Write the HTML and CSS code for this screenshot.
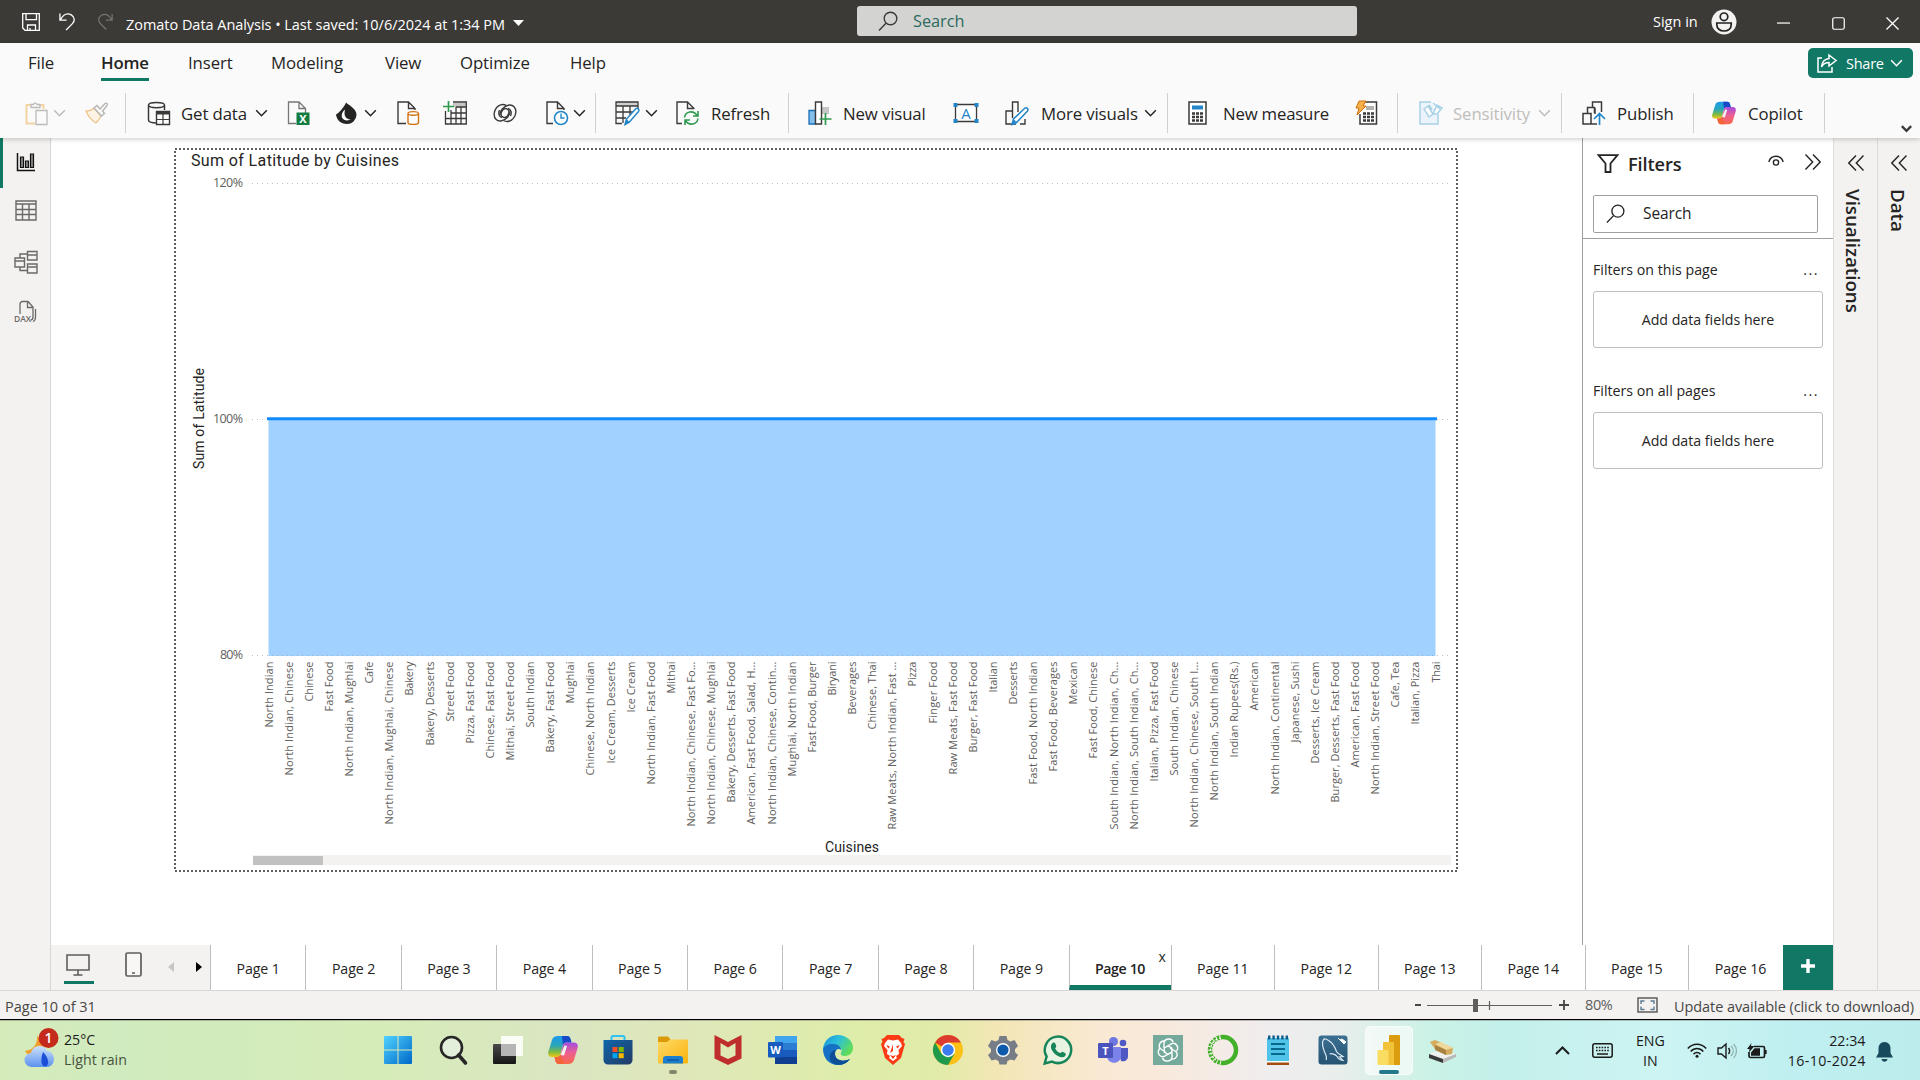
FILE: index.html
```html
<!DOCTYPE html>
<html lang="en">
<head>
<meta charset="utf-8">
<title>Zomato Data Analysis</title>
<link rel="stylesheet" href="styles.css">
</head>
<body>
<svg class="defs" width="0" height="0">
  <defs>
    <symbol id="chev" viewBox="0 0 14 9"><path d="M1 1.500 7 7.500 13 1.500" fill="none" stroke="currentColor" stroke-width="1.700"/></symbol>
    <symbol id="collapse" viewBox="0 0 16 16"><path d="M8 .5.8 8 8 15.500M15.500.5 8.300 8l7.200 7.500" fill="none" stroke="currentColor" stroke-width="1.400"/></symbol>
    <symbol id="search" viewBox="0 0 20 20"><circle cx="12.500" cy="7.500" r="6.300" fill="none" stroke="currentColor" stroke-width="1.400"/><path d="M8 12.200 1 19.500" stroke="currentColor" stroke-width="1.400"/></symbol>
    <linearGradient id="cpA" x1="0" y1="0" x2="0" y2="1"><stop offset="0" stop-color="#1b9bee"/><stop offset=".45" stop-color="#2aa5b8"/><stop offset=".75" stop-color="#7dbb45"/><stop offset="1" stop-color="#f2c811"/></linearGradient>
    <linearGradient id="cpB" x1="0" y1="0" x2="0" y2="1"><stop offset="0" stop-color="#a44ce0"/><stop offset=".5" stop-color="#ee5f8e"/><stop offset="1" stop-color="#f9694b"/></linearGradient>
    <symbol id="copilot" viewBox="0 0 30 30">
      <path d="M10 1h9c2 0 3 1 3.500 3l1 3.500h-5c-2 0-3 1-3.600 3L12.500 19c-.6 2-1.500 3-3.500 3H4c-3 0-4.500-2-3.600-5.500L4 5c.8-2.700 2.800-4 6-4z" fill="url(#cpA)"/>
      <path d="M14 1h5c2 0 3 1 3.500 3l1 3.500h-5c-2 0-3 1-3.600 2.500z" fill="#1849c6"/>
      <path d="M20 29h-9c-2 0-3-1-3.500-3l-1-4H9c2 0 3-1 3.600-3l2.400-8.500c.6-2 1.500-3 3.500-3H26c3 0 4.500 2 3.600 5.500L26 25c-.8 2.700-2.800 4-6 4z" fill="url(#cpB)"/>
      <path d="M16 29h-5c-2 0-3-1-3.500-3l-1-4H9c2 0 3-1 3.600-3z" fill="#f4653a"/>
      <path d="m16.500 10.500 2.500.5-3 9.500-3.500-.5z" fill="#f4f3ee"/>
    </symbol>
    <linearGradient id="winG" x1="0" y1="0" x2="1" y2="1"><stop offset="0" stop-color="#4fd3ff"/><stop offset="1" stop-color="#0067c8"/></linearGradient>
    <linearGradient id="edgeG" x1="0" y1="0" x2="1" y2=".5"><stop offset="0" stop-color="#1a8ed8"/><stop offset=".5" stop-color="#2bbfdc"/><stop offset="1" stop-color="#5fdc5a"/></linearGradient>
    <linearGradient id="foldG" x1="0" y1="0" x2="1" y2="1"><stop offset="0" stop-color="#ffd967"/><stop offset="1" stop-color="#fab30c"/></linearGradient>
    <linearGradient id="storeG" x1="0" y1="0" x2="1" y2="1"><stop offset="0" stop-color="#0e66ac"/><stop offset="1" stop-color="#233a63"/></linearGradient>
    <linearGradient id="tvG" x1="0" y1="0" x2="0" y2="1"><stop offset="0" stop-color="#4a4a4a"/><stop offset="1" stop-color="#161616"/></linearGradient>
    <linearGradient id="sqlG" x1="0" y1="0" x2="0" y2="1"><stop offset="0" stop-color="#3c7092"/><stop offset="1" stop-color="#245371"/></linearGradient>
    <linearGradient id="cloudG" x1="0" y1="0" x2="0" y2="1"><stop offset="0" stop-color="#cfe2fb"/><stop offset="1" stop-color="#5b92ee"/></linearGradient>
  </defs>
</svg>

<header class="titlebar">
  <svg class="i-save" viewBox="0 0 18 18"><path d="M.700.700h16.600v16.600H3L.700 15zM4 .700v6h10.500v-6M5.500 17v-5h8v5M8 17v-2" fill="none" stroke="#fff" stroke-width="1.300"/></svg>
  <svg class="i-undo" viewBox="0 0 18 19"><path d="M1 1v7h7M1.500 7.500C5 1.500 9.500.500 13 2.500c4 2.500 4 6.500 1 9.500L7.500 18.500" fill="none" stroke="#fff" stroke-width="1.400"/></svg>
  <svg class="i-redo" viewBox="0 0 18 19"><path d="M17 1v7h-7M16.500 7.500C13 1.500 8.500.500 5 2.500 1 5 1 9 4 12l6.500 6.500" fill="none" stroke="#777572" stroke-width="1.400"/></svg>
  <span class="doc-title">Zomato Data Analysis &#8226; Last saved: 10/6/2024 at 1:34 PM</span>
  <svg class="i-caret" viewBox="0 0 11 6"><path d="M0 0h11L5.500 6z" fill="#fff"/></svg>
  <div class="title-search"><svg viewBox="0 0 20 20"><use href="#search"/></svg><span>Search</span></div>
  <span class="signin">Sign in</span>
  <svg class="i-avatar" viewBox="0 0 26 26"><circle cx="13" cy="13" r="12.500" fill="#f3f2f1"/><g fill="none" stroke="#222" stroke-width="1.700"><circle cx="13" cy="7.800" r="3.800"/><path d="M5.800 14h14.400v1.500c0 4-3 6.500-7.200 6.500s-7.200-2.500-7.200-6.500z"/></g></svg>
  <svg class="i-win" viewBox="0 0 14 14"><path d="M0 6.500h14" stroke="#fff" stroke-width="1.300"/></svg>
  <svg class="i-win" viewBox="0 0 14 14"><rect x=".8" y=".8" width="12.400" height="12.400" rx="2" fill="none" stroke="#fff" stroke-width="1.300"/></svg>
  <svg class="i-win" viewBox="0 0 14 14"><path d="m.5.500 13 13M13.500.500l-13 13" stroke="#fff" stroke-width="1.400"/></svg>
</header>

<section class="ribbon">
  <nav class="menu">
    <span>File</span><span class="active">Home</span><span>Insert</span><span>Modeling</span><span>View</span><span>Optimize</span><span>Help</span>
    <button class="share"><svg class="i-share" viewBox="0 0 20 19"><path d="M5 4H1v14h14v-5M12 1l7 5.500-7 5.500V8.500c-4 0-6 1.500-7.500 4.500C5 7.500 8 5 12 4.500z" fill="none" stroke="#fff" stroke-width="1.500"/></svg><span>Share</span><svg class="chev" viewBox="0 0 14 9"><use href="#chev"/></svg></button>
  </nav>
  <div class="commands">
    <svg class="ic" viewBox="0 0 24 24"><path d="M6 4H1.500v18.500H10M14 4h4.500v4" fill="none" stroke="#f3d3a4" stroke-width="2"/><path d="M6 6.500v-3h2.500a1.800 1.800 0 0 1 3.500 0H15v3zM11 9.500h11V23.500H11z" fill="#fafafa" stroke="#bdbbb9" stroke-width="1.300"/></svg>
    <svg class="chev dim" viewBox="0 0 14 9"><use href="#chev"/></svg>
    <svg class="ic" viewBox="0 0 24 24"><path d="M1 10c4 0 6-1 8-3l7 8c-1 2-3 5-5 7C6 19 3 15 1 10z" fill="#fdf3e4" stroke="#eec48c" stroke-width="1.300"/><path d="m9 7 3-2.500 3 3.500 5-5.500c1.500-1 3 .5 2 2L17.500 10l2 2.500L16.500 15z" fill="#fafafa" stroke="#b5b3b1" stroke-width="1.300"/></svg>
    <i class="sep"></i>
    <svg class="ic" viewBox="0 0 24 24"><path d="M10 22c-4.500 0-8.500-1-8.500-3V4c0-3.500 16-3.500 16 0v5M1.500 4c0 3.500 16 3.500 16 0" fill="none" stroke="#3b3a39" stroke-width="1.500"/><path d="M9.500 10.500h13v13h-13z" fill="#fff" stroke="#3b3a39" stroke-width="1.400"/><path d="M9.500 12h13" stroke="#3b3a39" stroke-width="3"/><path d="M9.500 18.500h13M16 12v11" stroke="#3b3a39" stroke-width="1.200"/></svg>
    <span class="label l-get">Get data</span>
    <svg class="chev" viewBox="0 0 14 9"><use href="#chev"/></svg>
    <svg class="ic" viewBox="0 0 24 24"><path d="M9 22.500H1.500V1h10.500l6.500 6.500v5M12 1v6.500h6.500" fill="none" stroke="#797775" stroke-width="1.300"/><path d="M9.500 11.500h13v12.500h-13z" fill="#107c41"/><text x="16" y="21.800" text-anchor="middle" class="glyph" font-size="11">X</text></svg>
    <svg class="ic" viewBox="0 0 24 24"><path d="M10 1.500c3 3 10.500 6 10.500 12.500A9.500 9.500 0 0 1 11 23C4.500 23 .500 18.500 0 13.500c3-1.500 8-7 10-12z" fill="#252423"/><path d="M9 8.500c-4 3.500-4.500 8.500-.5 10.500 3 1.200 6-.5 6-.5-5-.5-7-4-5.500-10z" fill="#fff"/></svg>
    <svg class="chev" viewBox="0 0 14 9"><use href="#chev"/></svg>
    <svg class="ic" viewBox="0 0 24 24"><path d="M9 22.500H1V1h10.500L18 7.500V9M11.500 1v6.500H18" fill="none" stroke="#3b3a39" stroke-width="1.400"/><path d="M11 12.500c0-2.500 10.500-2.500 10.500 0v9c0 2.500-10.500 2.500-10.500 0zM11 12.500c0 2.300 10.500 2.300 10.500 0" fill="#fff" stroke="#d2700f" stroke-width="1.400"/></svg>
    <svg class="ic" viewBox="0 0 24 24"><path d="M10 2h13v4H10z" fill="#c8c6c4"/><path d="M10 1h13.300v22H2.500V10M2 17.500h21M8 12h15M8 9v14M13 6v17M18 6v17M13 6h10" fill="none" stroke="#3b3a39" stroke-width="1.300"/><path d="M5.500 0v11M0 5.500h11" stroke="#2f9a4e" stroke-width="1.700"/></svg>
    <svg class="ic" viewBox="0 0 24 24"><g fill="none" stroke="#3b3a39" stroke-width="1.400"><ellipse cx="12" cy="12" rx="3.600" ry="4.600" transform="rotate(25 12 12)"/><path d="M13.500 4.500C8 1.500 2 6 1.200 12.500.800 17.500 4 20.500 8 20 13.500 19 17.500 14 17 9.500M9 16.500c-3-1-4-4-2.500-7.500"/><path d="M10.500 19.500c5.500 3 11.500-1.500 12.300-8 .4-5-2.800-8-6.800-7.500C10.500 5 6.500 10 7 14.500M15 7.500c3 1 4 4 2.500 7.500"/></g></svg>
    <svg class="ic" viewBox="0 0 24 24"><path d="M7 22.500H1V1h10.500L18 7.500V9M11.500 1v6.500H18" fill="none" stroke="#3b3a39" stroke-width="1.400"/><circle cx="15" cy="17" r="6.500" fill="#fff" stroke="#2486c8" stroke-width="1.600"/><path d="M15 12.500V17h3.500" fill="none" stroke="#2486c8" stroke-width="1.400"/></svg>
    <svg class="chev" viewBox="0 0 14 9"><use href="#chev"/></svg>
    <i class="sep"></i>
    <svg class="ic" viewBox="0 0 24 24"><path d="M1 1h22v4H1z" fill="#d2d0ce"/><path d="M7 22.500H1V1h22v7M1 5h22M1 11h17M1 17h10M8 5v17M15 5v9" fill="none" stroke="#3b3a39" stroke-width="1.300"/><path d="m10 23.500 1.500-5.500L21 7.500c1.500-1 4 1 2.500 3L14 21.500z" fill="#fff" stroke="#2486c8" stroke-width="1.500"/><path d="m10 23.500 1.500-5.500 3 3z" fill="#2486c8"/></svg>
    <svg class="chev" viewBox="0 0 14 9"><use href="#chev"/></svg>
    <svg class="ic" viewBox="0 0 24 24"><path d="M6 22.500H1V1h10.500L18 7.500V8M11.500 1v6.500H18" fill="none" stroke="#3b3a39" stroke-width="1.400"/><path d="M8.500 16.500c1-6.500 9-7.500 12.500-2M22 10v5h-5M22 17.500c-1 6.500-9 7.500-12.500 2M9 24v-5h5" fill="none" stroke="#2f9a4e" stroke-width="1.600"/></svg>
    <span class="label l-refresh">Refresh</span>
    <i class="sep"></i>
    <svg class="ic" viewBox="0 0 24 24"><path d="M13 6h8v7h-8z" fill="#c8c6c4"/><path d="M1 9.500h6.500V23H1z" fill="#83beec" stroke="#1a6fb8" stroke-width="1.300"/><path d="M7.500 1h6v22h-6z" fill="#fff" stroke="#3b3a39" stroke-width="1.400"/><path d="M17.500 12v12M11.500 18h12" stroke="#2f9a4e" stroke-width="1.700"/></svg>
    <span class="label l-visual">New visual</span>
    <svg class="ic wide" viewBox="0 0 26 24"><path d="M2.500 3.500h21v17h-21z" fill="#fff" stroke="#3b3a39" stroke-width="1.300"/><path d="M.500 2h4v4h-4zM21.500 2h4v4h-4zM.500 18h4v4h-4zM21.500 18h4v4h-4z" fill="#2486c8"/><text x="13" y="17.500" text-anchor="middle" class="glyph-a" font-size="15">A</text></svg>
    <svg class="ic" viewBox="0 0 24 24"><path d="M7 10H1v13h6M7.500 17V1h5.500v10M20 18v5h-5M8 23h3" fill="none" stroke="#3b3a39" stroke-width="1.400"/><path d="m7 23.500 1.500-5.500L20 7c1.500-1 4 1 2.500 3L11 22z" fill="#fff" stroke="#2486c8" stroke-width="1.500"/><path d="M7 23.500 8.500 18l3 3z" fill="#2486c8"/></svg>
    <span class="label l-more">More visuals</span>
    <svg class="chev" viewBox="0 0 14 9"><use href="#chev"/></svg>
    <i class="sep"></i>
    <svg class="ic" viewBox="0 0 24 24"><path d="M1 1h17v22H1z" fill="#fff" stroke="#3b3a39" stroke-width="1.500"/><path d="M4 4.500h11v4H4z" fill="#2486c8"/><path d="M4 12.500h11M4 16h11M4 19.500h11" stroke="#3b3a39" stroke-width="2.500" stroke-dasharray="3 1"/></svg>
    <span class="label l-measure">New measure</span>
    <svg class="ic" viewBox="0 0 24 24"><path d="M10 1h11.500v22H5V13" fill="#fff" stroke="#3b3a39" stroke-width="1.500"/><path d="M11 5h8v4h-8z" fill="#b3b0ad"/><path d="M8 12.500h11M8 16h11M8 19.500h11" stroke="#3b3a39" stroke-width="2.500" stroke-dasharray="3 1"/><path d="M4 0h7L8 5h3L2 14l2-7H1z" fill="#f5b04c" stroke="#d2700f" stroke-width="1"/></svg>
    <i class="sep"></i>
    <svg class="ic" viewBox="0 0 24 24"><path d="M12 1H1v22h18V13" fill="#eaf4fa" stroke="#a9d1e6" stroke-width="1.500"/><path d="m5 8 4-3 5 8-4 3zM10 4l3 5M14 13l4-9 5 3-5 6zM14 2l7 6" fill="#fff" stroke="#a9d1e6" stroke-width="1.500"/></svg>
    <span class="label l-sens">Sensitivity</span>
    <svg class="chev dim" viewBox="0 0 14 9"><use href="#chev"/></svg>
    <i class="sep"></i>
    <svg class="ic" viewBox="0 0 24 24"><path d="M1 12.500h8V23H1zM5.500 12V6.500h7V12M10.500 6V1h9v10M9 23h6M13 7v6" fill="none" stroke="#3b3a39" stroke-width="1.500"/><path d="M17.500 24V12.500M12 18l5.500-5.500L23 18" fill="none" stroke="#2486c8" stroke-width="1.700"/></svg>
    <span class="label l-publish">Publish</span>
    <i class="sep"></i>
    <svg class="ic" viewBox="0 0 30 30"><use href="#copilot"/></svg>
    <span class="label l-copilot">Copilot</span>
    <i class="sep"></i>
    <svg class="i-fold" viewBox="0 0 14 9"><path d="M1 1.500 7 7.500 13 1.500" fill="none" stroke="#3b3a39" stroke-width="3"/></svg>
  </div>
</section>

<div class="workspace">
  <aside class="rail">
    <div class="rail-item on"><svg viewBox="0 0 24 24"><path d="M3.500 3v17.500H21" fill="none" stroke="#111" stroke-width="1.500"/><path d="M6.500 7h3v10.500h-3zM11.500 11h3v6.500h-3zM16.500 4h3v13.500h-3z" fill="#888" stroke="#111" stroke-width="1.200"/></svg></div>
    <div class="rail-item"><svg viewBox="0 0 24 24"><path d="M2 2h20v19H2zM2 5h20M2 10.500h20M2 15.500h20M8.500 5v16M15 5v16" fill="none" stroke="#6b6967" stroke-width="1.400"/></svg></div>
    <div class="rail-item"><svg viewBox="0 0 24 24"><path d="M1 8h9.500v9H1zM1 11h9.500M13.500 1.500H23V10h-9.500zM13.500 5H23M13.500 14H23v9h-9.500zM13.500 17H23M6 8V4h7.500M6 17v3.500h7.500" fill="none" stroke="#6b6967" stroke-width="1.400"/></svg></div>
    <div class="rail-item"><svg viewBox="0 0 24 24"><path d="M6 14V4c0-1.500 1-2.500 2.500-2.500H14L19 7v10c0 2-1 3-2.500 3M13.500 2v5.500H19M21.500 9v8c0 3-1 4-2.500 4.500" fill="none" stroke="#6b6967" stroke-width="1.300"/><text x="0" y="21.500" class="dax" font-size="8.500" textLength="17">DAX</text></svg></div>
  </aside>

  <div class="main">
    <div class="canvas-row">
      <div class="canvas">
        <svg id="chart" class="chart" viewBox="174 148 1284 724" width="1284" height="724">
          <rect x="175" y="149" width="1282" height="722" fill="none" stroke="#605e5c" stroke-width="2" stroke-dasharray="2 2"/>
          <text class="ch-title" x="191" y="166" textLength="208">Sum of Latitude by Cuisines</text>
          <text class="ch-axis" x="213" y="187" textLength="30">120%</text>
          <text class="ch-axis" x="213" y="423" textLength="30">100%</text>
          <text class="ch-axis" x="220" y="659" textLength="23">80%</text>
          <path d="M268.500 419H1435.500V656H268.500z" fill="#a0d1ff"/>
          <path d="M252 183.500H1450M252 419.500H1450M252 655.500H1450" stroke="#9a9896" stroke-opacity=".6" stroke-dasharray="1 4"/>
          <path d="M267 418.700H1437" stroke="#118dff" stroke-width="3"/>
          <text class="ch-name" transform="translate(204 469) rotate(-90)" textLength="101">Sum of Latitude</text>
          <g id="categories" class="ch-cat"></g>
          <text class="ch-name" x="825" y="852" textLength="54">Cuisines</text>
          <rect x="253" y="855" width="1198" height="10" fill="#f3f2f1"/>
          <rect x="253" y="856" width="70" height="9" fill="#c1c1c1"/>
        </svg>
      </div>
      <aside class="filters">
        <div class="f-head">
          <svg class="i-funnel" viewBox="0 0 22 19"><path d="M1.500 1.200h19L13.500 9.500V18h-5V9.500z" fill="none" stroke="#252423" stroke-width="1.800"/></svg>
          <b>Filters</b>
          <svg class="i-eye" viewBox="0 0 16 12"><path d="M.800 7C3-.700 13-.700 15.200 7" fill="none" stroke="#252423" stroke-width="1.400"/><circle cx="8" cy="7.500" r="2.600" fill="none" stroke="#252423" stroke-width="1.400"/></svg>
          <svg class="i-more" viewBox="0 0 16 16"><use href="#collapse" transform="matrix(-1 0 0 1 16 0)"/></svg>
        </div>
        <div class="f-search"><svg viewBox="0 0 20 20"><use href="#search"/></svg><span>Search</span></div>
        <div class="f-body">
          <div class="f-sec"><span>Filters on this page</span><i>...</i></div>
          <div class="f-drop">Add data fields here</div>
          <div class="f-sec second"><span>Filters on all pages</span><i>...</i></div>
          <div class="f-drop">Add data fields here</div>
        </div>
      </aside>
    </div>
    <div class="tabs">
      <div class="views">
        <svg class="v-desk" viewBox="0 0 24 22"><path d="M1 1h22v15H1zM12 16v5M7.500 21h9" fill="none" stroke="#605e5c" stroke-width="1.600"/></svg>
        <svg class="v-phone" viewBox="0 0 17 25"><rect x="1" y="1" width="15" height="23" rx="1.500" fill="#f8f7f6" stroke="#605e5c" stroke-width="1.700"/><path d="M7 21h3" stroke="#605e5c" stroke-width="1.500"/></svg>
        <svg class="v-arrow" viewBox="0 0 6 10"><path d="M6 0v10L0 5z" fill="#c8c6c4"/></svg>
        <svg class="v-arrow" viewBox="0 0 6 10"><path d="M0 0v10l6-5z" fill="#000"/></svg>
      </div>
      <div class="tab">Page 1</div><div class="tab">Page 2</div><div class="tab">Page 3</div><div class="tab">Page 4</div><div class="tab">Page 5</div><div class="tab">Page 6</div><div class="tab">Page 7</div><div class="tab">Page 8</div><div class="tab">Page 9</div>
      <div class="tab current">Page 10<span class="close">x</span></div>
      <div class="tab wide">Page 11</div><div class="tab wide">Page 12</div><div class="tab wide">Page 13</div><div class="tab wide">Page 14</div><div class="tab wide">Page 15</div><div class="tab wide last">Page 16</div>
      <div class="add"><svg viewBox="0 0 14 14"><path d="M7 0v14M0 7h14" stroke="#fff" stroke-width="3.400"/></svg></div>
    </div>
  </div>

  <aside class="side vis"><svg viewBox="0 0 16 16"><use href="#collapse"/></svg><span>Visualizations</span></aside>
  <aside class="side data"><svg viewBox="0 0 16 16"><use href="#collapse"/></svg><span>Data</span></aside>
</div>

<div class="status">
  <span class="s-page">Page 10 of 31</span>
  <svg class="s-zoom" viewBox="0 0 158 16"><path d="M1 8h6M145 8h10M150 3v10" stroke="#484644" stroke-width="1.800"/><path d="M13 8.500h125M75.500 4v9" stroke="#605e5c" stroke-width="1.200"/><path d="M59 2h5v13h-5z" fill="#605e5c"/></svg>
  <span class="s-pct">80%</span>
  <svg class="s-fit" viewBox="0 0 21 16"><path d="M1 1h19v14H1z" fill="none" stroke="#605e5c" stroke-width="1.500"/><path d="M4 7V4h3.500M17 7V4h-3.500M4 9.500v3h3.500M17 9.500v3h-3.500" fill="none" stroke="#5b7d94" stroke-width="1.400"/></svg>
  <span class="s-upd">Update available (click to download)</span>
</div>

<footer class="taskbar">
  <div class="weather">
    <svg viewBox="0 0 36 42"><path d="M13 8c1 8-3 15-12 16 4 8 16 7 19-3z" fill="#f2a02c"/><path d="M8 40a7 7 0 0 1-1-14c1-8 13-10 16-2 8 0 10 14 1 16z" fill="url(#cloudG)"/><path d="M19 25c6 6 7 14 2 14.500-5-.5-4-9-2-14.500z" fill="#1c4fd8"/><circle cx="24.500" cy="11" r="10" fill="#c42b1c"/><text x="24.500" y="16" class="glyph-n" text-anchor="middle" font-size="14">1</text></svg>
    <div class="w-text"><span>25°C</span><span class="w-sub">Light rain</span></div>
  </div>
  <div class="apps">
    <div class="app"><svg viewBox="0 0 30 30"><path d="M1 2a1 1 0 0 1 1-1h12.500v13.500H1zM15.500 1H28a1 1 0 0 1 1 1v12.500H15.500zM1 15.500h13.500V29H2a1 1 0 0 1-1-1zM15.500 15.500H29V28a1 1 0 0 1-1 1H15.500z" fill="url(#winG)"/></svg></div>
    <div class="app"><svg viewBox="0 0 30 30"><circle cx="13.500" cy="12.500" r="10.500" fill="#e3efdb" stroke="#272727" stroke-width="2.600"/><path d="m20.500 20 7 8" stroke="#272727" stroke-width="3.600" stroke-linecap="round"/></svg></div>
    <div class="app"><svg viewBox="0 0 30 30"><rect x="0" y="9" width="23" height="20" rx="1" fill="url(#tvG)"/><rect x="8" y="1" width="22" height="20" rx="1" fill="#fff" opacity=".85"/><path d="M8 9h15v12H8z" fill="#b5b5b5"/></svg></div>
    <div class="app"><svg viewBox="0 0 30 30"><use href="#copilot"/></svg></div>
    <div class="app"><svg viewBox="0 0 30 30"><path d="M8.500 7V2.500c0-1 .5-1.500 1.500-1.500h10c1 0 1.500.500 1.500 1.500V7" fill="none" stroke="#2fc3f4" stroke-width="2"/><path d="M.500 5h29v20a4.500 4.500 0 0 1-4.500 4.500H5A4.500 4.500 0 0 1 .500 25z" fill="url(#storeG)"/><path d="M9.500 12h5v5h-5z" fill="#f25022"/><path d="M15.700 12h5v5h-5z" fill="#7fba00"/><path d="M9.500 18.200h5v5h-5z" fill="#00a4ef"/><path d="M15.700 18.200h5v5h-5z" fill="#ffb900"/></svg></div>
    <div class="app run-dot"><svg viewBox="0 0 30 30"><path d="M0 3c0-1 .5-1.500 1.500-1.500H10L13 5v4H0z" fill="#dc9a09"/><path d="M0 7h9l3-2.500h18V27c0 1-.5 1.500-1.500 1.500h-27C.500 28.500 0 28 0 27z" fill="url(#foldG)"/><path d="M5 28.500V24c0-2 1-3 3-3h14c2 0 3 1 3 3v4.500z" fill="#1b7fd0"/><path d="M9 25h12" stroke="#0b5597" stroke-width="1.400"/></svg></div>
    <div class="app"><svg viewBox="0 0 30 30"><path d="M1.500 0 15 7 28.500 0v23.500L15 30 1.500 23.500zM7.500 8v12.500L15 24l7.500-3.500V8L15 12.500z" fill="#c02d2d" fill-rule="evenodd"/></svg></div>
    <div class="app"><svg viewBox="0 0 30 30"><path d="M7 1h22v7H7z" fill="#41a5ee"/><path d="M7 8h22v7H7z" fill="#2b7cd3"/><path d="M7 15h22v7H7z" fill="#185abd"/><path d="M7 22h22v7H7z" fill="#103f91"/><rect y="7" width="15" height="15.500" rx="1" fill="#185abd"/><text x="7.500" y="18.800" class="glyph" text-anchor="middle" font-size="11">W</text></svg></div>
    <div class="app"><svg viewBox="0 0 30 30"><path d="M0 14C1 5 7.500 0 15 0c8 0 15 5.500 15 13 0 5-4 8-8 8-3 0-5-1-4-3 2-4-1-7-5-7C7 11 3 13 0 14z" fill="url(#edgeG)"/><path d="M0 14c2-4.500 7-5.500 11-5 5 .5 7.500 4 7 6-2-2-6-1-6 4 0 5 6 9 15 5-3 4-7 6-12 6C6 30 0 23 0 14z" fill="#1670c4"/><path d="M12 19c0 5 6 9 15 5-3 4-7 6-12 6-7-1-9-6-8-10 1-3 3-5 6-5-1 1-1 2-1 4z" fill="#0d4f96"/></svg></div>
    <div class="app"><svg viewBox="0 0 30 30"><path d="M9 0h12l3 3 2.500 1-1 3 1.500 2-4 14-8 7-8-7L3 9l1.500-2-1-3L6 3z" fill="#fb3b16"/><path d="m7 8 3-3.500 5 1 5-1L23 8l1 3-3.500 4 .5 4-3 2 1 2-4 3-4-3 1-2-3-2 .5-4L6 11z" fill="#fff"/><path d="m8 10 4 1.500-1.500 2zM22 10l-4 1.500 1.500 2zM15 9v7l-3 2M15 16l3 2M12 20l3 1 3-1-3 4z" fill="#fb3b16"/></svg></div>
    <div class="app"><svg viewBox="0 0 30 30"><circle cx="15" cy="15" r="15" fill="#fbc116"/><path d="M15 15 2 7.500A15 15 0 0 1 28 7.500H15z" fill="#dc3b30"/><path d="M2 7.500A15 15 0 0 0 15 30l6.500-11.300L8.500 18.700z" fill="#1f9a4c"/><circle cx="15" cy="15" r="7.200" fill="#fff"/><circle cx="15" cy="15" r="5.700" fill="#3b7def"/></svg></div>
    <div class="app"><svg viewBox="0 0 30 30"><path d="M11.500 1h7l1 4 3 1.500 4-1.500L30 11l-3 3v3l3 3-3.500 5.500-4-1-3 1.500-1 3.500h-7l-1-3.500-3-1.500-4 1L0 20l3-3v-3l-3-3 3.500-6 4 1.500 3-1.500z" fill="#767d86"/><circle cx="15" cy="15" r="7" fill="#fff"/><circle cx="15" cy="15" r="5.600" fill="#0b59a8"/></svg></div>
    <div class="app"><svg viewBox="0 0 30 30"><path d="M1.700 28.500 3.600 21.500A13.200 13.200 0 1 1 9 26.600z" fill="#e9f3e2" stroke="#17855a" stroke-width="2.500"/><path d="M9 8.500c1-1.500 3-1 3.500.5l.8 2.300c.2 1-1.300 1.700-1 2.500 1 2 2.500 3.300 4.700 4.200 1 .3 1.500-1.600 2.500-1.200l3 1.400c1 .8 0 3.800-3 4C14 22.500 7 15.500 8 10.500z" fill="#17855a"/></svg></div>
    <div class="app"><svg viewBox="0 0 30 30"><circle cx="15.500" cy="6.500" r="4.500" fill="#6f76e0"/><circle cx="25" cy="8" r="3.300" fill="#4f58c4"/><path d="M20 13h10v8c0 4-3 6-7 5z" fill="#4f58c4"/><path d="M9 12h14v9c0 9-14 9-14 0z" fill="#7b83eb"/><rect y="8" width="15" height="15" rx="1" fill="#4b53bc"/><text x="7.500" y="19.500" class="glyph" text-anchor="middle" font-size="11">T</text></svg></div>
    <div class="app"><svg viewBox="0 0 30 30"><path d="M0 0h30v30H0z" fill="#74a99b"/><g fill="none" stroke="#fff" stroke-width="1.400"><path d="M11 13V8.500c0-5.500 8-6 9-1.500M13 12l5-3c5-2.500 8.500 3.500 5.500 7M17 13l5 3c4.500 3 1 9-3.500 8M19 17v5c0 5-8 5.500-9.500 1M17 18l-5 3c-5 2.500-8.500-3-5.500-7.500M12.500 17l-4-2.500C4 11.500 7 5.500 11.500 6M11.300 13 15 10.800l3.800 2.200v4.200L15 19.400l-3.700-2.200z"/></g></svg></div>
    <div class="app"><svg viewBox="0 0 30 30"><path d="M15 2A13 13 0 0 1 15 28" fill="none" stroke="#43b02a" stroke-width="4.500"/><path d="M15 2a13 13 0 0 0 0 26" fill="none" stroke="#43b02a" stroke-width="4.500" stroke-dasharray="2.500 1"/><path d="M13 3a12 12 0 0 0-5 22" fill="none" stroke="#fff" stroke-width="1.200" stroke-dasharray="2 2"/></svg></div>
    <div class="app"><svg viewBox="0 0 30 30"><path d="M4 3h22v24H4z" fill="#4fc3e8"/><path d="M4 27h22v3H4z" fill="#a34d13"/><path d="M4 26h22v1.500H4z" fill="#fff"/><path d="M8 9h14M8 14h14M8 19h14" stroke="#076a8c" stroke-width="2"/><path d="M5 2.500h20" stroke="#0c5b8c" stroke-width="4" stroke-dasharray="2.400 2"/></svg></div>
    <div class="app"><svg viewBox="0 0 30 30"><rect x=".5" y=".5" width="29" height="29" rx="3" fill="url(#sqlG)"/><path d="M8 25c1.500-2.500 0-5-1.500-8C5 13 4 7 5.500 4.500c1-1.200 3.500 0 5 1C15 8 17 12 18.500 16.500c.8 2 3 2.500 6.500 5l-3.500.3 3.500 3.700c-3-.3-4.500-1.500-6-4-1.500-2.200-5-3.300-7.500-2.500" fill="none" stroke="#dce9f2" stroke-width="1.200"/><path d="m20 3 3 3M22 5l4 4 2-2-4-3z" fill="#fff" stroke="#fff"/></svg></div>
    <div class="app selected"><svg viewBox="0 0 30 30"><path d="M15 1a1 1 0 0 1 1-1h9a1 1 0 0 1 1 1v29H15z" fill="#dc9c10"/><path d="M9 8a1 1 0 0 1 1-1h9a1 1 0 0 1 1 1v22H9z" fill="#f2c238"/><path d="M3.500 16a1 1 0 0 1 1-1h9a1 1 0 0 1 1 1v14H4.500a1 1 0 0 1-1-1z" fill="#fbdc62"/></svg></div>
    <div class="app"><svg viewBox="0 0 30 30"><path d="m1 19 12-4 15 4-13 5z" fill="#efefef"/><path d="m1 19 14 5v4L1 23z" fill="#3a3a3a"/><path d="m15 24 13-5v3l-13 6z" fill="#b9b9b9"/><path d="m2 7 5-2 18 8-1 6-6 1-11-6z" fill="#d2ab5c"/><path d="m7 9 6-2 12 6-7 2z" fill="#f0d79b"/><path d="m7 10 11 5v5L7 15z" fill="#a98240"/></svg></div>
  </div>
  <div class="tray">
    <svg class="t-up" viewBox="0 0 15 9"><path d="m1 8 6.500-6.500L14 8" fill="none" stroke="#1b1b1b" stroke-width="2"/></svg>
    <svg class="t-kb" viewBox="0 0 21 15"><rect x=".8" y=".8" width="19.400" height="13.400" rx="2" fill="none" stroke="#1b1b1b" stroke-width="1.500"/><path d="M4 4.500h13M4 7.500h13" stroke="#1b1b1b" stroke-width="1.600" stroke-dasharray="1.600 1.200"/><path d="M5 11h11" stroke="#1b1b1b" stroke-width="1.500"/></svg>
    <div class="t-lang"><span>ENG</span><span>IN</span></div>
    <svg class="t-wifi" viewBox="0 0 20 15"><path d="M.800 5.500C6-.300 14-.300 19.200 5.500M3.700 8.500c3.500-4 9-4 12.600 0M6.500 11.300c2-2.300 5-2.300 7 0" fill="none" stroke="#1b1b1b" stroke-width="1.500"/><circle cx="10" cy="13.300" r="1.500" fill="#1b1b1b"/></svg>
    <svg class="t-vol" viewBox="0 0 20 16"><path d="M1 5h3.500L9 1v14L4.500 11H1zM11.500 5c1.500 2 1.500 4 0 6" fill="none" stroke="#1b1b1b" stroke-width="1.400"/><path d="M14 3c3 3 3 7 0 10M16.500 1c4 4 4 10 0 14" fill="none" stroke="#8fb0b0" stroke-width="1.300"/></svg>
    <svg class="t-bat" viewBox="0 0 20 16"><path d="M7 3.500h9c1 0 1.500.500 1.500 1.500v8c0 1-.5 1.500-1.500 1.500H3.500C2.500 14.500 2 14 2 13V9M18.800 7v4" fill="none" stroke="#1b1b1b" stroke-width="1.700"/><path d="M7.500 5.300h5.500v7.400H4V9.500zM4.500 0 4 3h3.500L2 9.500 2.500 6H0z" fill="#1b1b1b"/></svg>
    <div class="t-clock"><span>22:34</span><span class="t-date">16-10-2024</span></div>
    <svg class="t-bell" viewBox="0 0 17 20"><path d="M8.500 0c4 0 6 3 6 6.500V11l2.500 4.500H0L2.500 11V6.500C2.500 3 4.500 0 8.500 0zM5.500 17h6c-.5 3.500-5.500 3.500-6 0z" fill="#174a5c"/></svg>
  </div>
</footer>
<script src="chart.js"></script>
</body>
</html>
```
FILE: styles.css
```css
* { box-sizing: border-box; }
body {
  margin: 0; width: 1920px; height: 1080px; overflow: hidden;
  display: flex; flex-direction: column;
  font-family: "Open Sans", "Noto Sans", sans-serif;
  color: #252423; background: #fff; white-space: nowrap;
}
svg { display: block; flex: none; overflow: visible; }
.defs { position: absolute; }

/* title bar */
.titlebar {
  height: 43px; flex: none; background: #3b3a37; color: #fff;
  display: grid; align-items: center;
  grid-template-columns: 37px 38px 29px 387px 344px 796px 58px 66px 55px 54px 34px;
  padding-left: 22px;
}
.i-save { width: 18px; height: 18px; }
.i-undo, .i-redo { width: 17px; height: 19px; }
.i-redo { width: 16px; }
.doc-title { font-size: 14.500px; letter-spacing: -0.04px; padding-top: 5px; }
.i-caret { width: 11px; height: 6px; margin-top: 3px; }
.title-search {
  width: 500px; height: 30px; margin-top: -1px; background: #d3d3d1; border-radius: 3px;
  display: flex; align-items: center; padding-left: 21px; gap: 15px;
  color: #2b6a5e; font-size: 16.300px;
}
.title-search svg { width: 20px; height: 20px; color: #3b3a39; }
.signin { font-size: 14.500px; }
.i-avatar { width: 26px; height: 26px; }
.i-win { width: 13px; height: 13px; margin-top: 3px; }

/* ribbon */
.ribbon { height: 95px; flex: none; background: #fafafa; box-shadow: 0 1px 5px rgba(0,0,0,.22); position: relative; z-index: 1; display: flex; flex-direction: column; }
.menu {
  height: 45px; padding: 5px 0 0 28px; display: grid; align-items: start; justify-items: start;
  grid-template-columns: 73px 87px 83px 114px 75px 110px 1238px 106px;
  font-size: 16.800px; letter-spacing: -0.1px; line-height: 30px;
}
.menu .active { font-weight: 600; height: 33px; letter-spacing: -0.2px; border-bottom: 3px solid #117865; }
.share {
  width: 105px; height: 30px; border: 0; border-radius: 5px; background: #117865; color: #fff;
  font: 14.500px "Open Sans", sans-serif; letter-spacing: -0.25px; display: grid; grid-template-columns: 29px 44px 14px; align-items: center; justify-items: start; padding: 0 0 0 9px;
}
.i-share { width: 20px; height: 19px; }
.chev { width: 13px; height: 8px; margin-top: -1px; color: #252423; }
.share .chev { color: #fff; }
.chev.dim { color: #bdbbb9; }
.commands {
  height: 50px; padding: 5px 0 5px 25px; display: grid; align-items: center;
  grid-template-columns: 28px 32px 40px 22px 34px 74px 32px 49px 28px 33px 46px 50px 53px 27px 22px 20px 30px 31px 35px 77px 20px 35px 110px 52px 36px 103px 23px 21px 35px 132px 42px 22px 34px 85px 23px 21px 35px 76px 19px 36px 76px 77px 18px;
}
.ic { width: 24px; height: 24px; }
.ic.wide { width: 26px; }
.sep { width: 1px; height: 40px; background: #d2d0ce; }
.label { font-size: 16.800px; letter-spacing: -0.12px; line-height: 24px; padding-top: 1px; }
.l-measure { letter-spacing: -0.2px; }
.l-sens { color: #c0bebc; }
.i-fold { width: 11px; height: 7px; margin-top: 31px; }
.glyph { font-family: "Open Sans", sans-serif; font-weight: 700; fill: #fff; }
.glyph-n { font-family: "Open Sans", sans-serif; font-weight: 600; fill: #fff; }
.glyph-a { font-family: "Open Sans", sans-serif; fill: #2486c8; }
.dax { font-family: "Open Sans", sans-serif; font-weight: 600; fill: #6b6967; }

/* workspace */
.workspace { height: 852px; flex: none; display: flex; }
.rail { width: 51px; background: #f3f2f1; border-right: 1px solid #d8d6d4; }
.rail-item { height: 50.500px; padding: 0 0 4px 10.500px; display: flex; align-items: center; border-left: 3px solid transparent; }
.rail-item.on { border-left-color: #117865; height: 50px; padding-bottom: 2px; }
.rail-item svg { width: 24px; height: 24px; }
.main { width: 1782px; display: flex; flex-direction: column; }
.canvas-row { height: 807px; display: flex; }
.canvas { width: 1531px; padding: 10px 0 0 123px; background: #fff; }
.ch-title { font: 16px Roboto, sans-serif; fill: #252423; }
.ch-name { font: 14px Roboto, sans-serif; fill: #252423; }
.ch-axis { font: 12.500px "Open Sans", sans-serif; fill: #605e5c; }
.ch-cat { font: 11px "Open Sans", sans-serif; fill: #605e5c; }

.filters { width: 251px; border-left: 1px solid #a19f9d; background: #fff; }
.f-head { height: 57px; padding: 12px 0 21px 14px; display: grid; grid-template-columns: 31px 140px 37px 20px; align-items: center; }
.f-head b { font-size: 18.200px; font-weight: 600; line-height: 24px; letter-spacing: -0.1px; padding-top: 2px; }
.i-funnel { width: 22px; height: 19px; }
.i-eye { width: 16px; height: 12px; margin-top: -5px; }
.i-more { width: 16px; height: 16px; margin-top: -3px; }
.f-search { margin-left: 10px; width: 225px; height: 38px; border: 1px solid #a19f9d; border-radius: 2px; display: flex; align-items: center; padding: 0 0 2px 12px; gap: 18px; font-size: 15.500px; letter-spacing: -0.1px; }
.f-search svg { width: 19px; height: 19px; }
.f-body { margin-top: 5px; border-top: 1px solid #a19f9d; padding: 21px 10px 0 10px; }
.f-sec { display: flex; justify-content: space-between; font-size: 14.200px; height: 20px; line-height: 20px; padding-right: 4px; }
.f-sec i { font-style: normal; letter-spacing: 1.500px; }
.f-sec.second { margin-top: 33px; }
.f-drop { margin-top: 11px; height: 57px; border: 1px solid #c0bebc; border-radius: 3px; display: flex; align-items: center; justify-content: center; font-size: 14.200px; }

.side { background: #f3f2f1; border-left: 1px solid #dedcda; display: flex; flex-direction: column; align-items: center; padding-top: 17px; gap: 18px; }
.side svg { width: 16px; height: 16px; }
.side span { writing-mode: vertical-rl; font-size: 18.800px; font-weight: 600; line-height: 24px; letter-spacing: -0.05px; margin-right: 5px; }
.vis { width: 44px; }
.data { width: 43px; }
.data span { margin-right: 3px; }

/* page tabs */
.tabs { height: 45px; display: flex; background: #f3f2f1; }
.views { width: 159px; display: grid; grid-template-columns: 59px 43px 28px 10px; padding: 7px 0 0 15px; align-items: start; background: linear-gradient(#117865, #117865) 13px 36px / 30px 3px no-repeat; }
.v-desk { width: 24px; height: 22px; margin-top: 2px; }
.v-phone { width: 17px; height: 25px; }
.v-arrow { width: 6px; height: 10px; margin-top: 10px; }
.tab { flex: 0 0 95.400px; border-left: 1px solid #c0bebc; background: #fff; display: flex; align-items: center; justify-content: center; padding-top: 1px; font-size: 14.200px; letter-spacing: -0.1px; }
.tab.current { flex-basis: 102px; position: relative; font-weight: 600; letter-spacing: -0.4px; border-bottom: 5px solid #117865; padding-top: 6px; }
.close { position: absolute; right: 5px; top: 2px; font-size: 14px; font-weight: 400; }
.tab.wide { flex-basis: 103.500px; }
.tab.last { flex-basis: 95px; padding-left: 9px; }
.add { flex: 1; background: #117865; display: flex; align-items: center; justify-content: center; padding-bottom: 4px; }
.add svg { width: 14px; height: 14px; }

/* status bar */
.status { height: 30px; flex: none; background: #f3f2f1; border-top: 1px solid #d8d6d4; border-bottom: 1px solid #000; display: grid; align-items: center; padding-left: 5px; color: #484644; font-size: 14.500px;
  grid-template-columns: 1409px 171px 52px 37px 246px; }
.s-zoom { width: 158px; height: 16px; }
.s-pct { font-size: 14.500px; letter-spacing: -0.4px; color: #605e5c; padding-bottom: 2px; }
.s-fit { width: 21px; height: 16px; }
.s-page, .s-upd { padding-top: 2px; }
.s-upd { letter-spacing: -0.07px; }

/* taskbar */
.taskbar {
  height: 60px; flex: none; display: flex; border-top: 1px solid rgba(90,90,90,.35);
  background: linear-gradient(90deg, #d6ebba 0, #d0ebbf 120px, #d6ecb8 380px, #dae6c2 560px, #dfe7ba 680px, #deeda9 860px, #e2eba8 940px, #f3e6b6 1000px, #f9e9d3 1100px, #f8e9dc 1160px, #f0edee 1270px, #e8eeec 1340px, #cbf2e6 1430px, #c3f0ea 1500px, #cdf4f3 1660px, #bfeff0 1800px, #bdecec 1920px);
  color: #1b1b1b; font-size: 14.200px;
}
.weather { width: 370px; padding-left: 24px; display: flex; gap: 4px; }
.weather svg { width: 36px; height: 42px; margin-top: 6px; }
.w-text { padding-top: 9px; line-height: 20px; display: flex; flex-direction: column; }
.w-sub { color: #47523f; letter-spacing: 0.1px; }
.apps { display: flex; }
.app { width: 55.060px; display: flex; flex-direction: column; align-items: center; padding-top: 14px; }
.app svg { width: 30px; height: 30px; }
.run-dot::after { content: ""; width: 8px; height: 4px; margin-top: 5px; border-radius: 2px; background: #82866c; }
.selected { width: 48px; height: 49px; margin: 5px 3px 0 4px; padding-top: 8px; border-radius: 5px; background: rgba(255,255,255,.6); border: 1px solid rgba(255,255,255,.5); }
.selected::after { content: ""; width: 20px; height: 4px; margin-top: 5px; border-radius: 2px; background: #22798c; }
.tray { display: grid; padding-left: 84.500px; align-items: center; line-height: 20px; grid-template-columns: 37px 44px 51px 30px 30px 40px 78px 30px; }
.t-up { width: 15px; height: 9px; }
.t-kb { width: 21px; height: 15px; }
.t-lang, .t-clock { display: flex; flex-direction: column; }
.t-lang { align-items: center; width: 28px; font-size: 14.200px; padding-top: 1px; }
.t-clock { align-items: flex-end; }
.t-date { letter-spacing: 0.4px; margin-right: -0.4px; }
.t-wifi { width: 20px; height: 15px; }
.t-vol, .t-bat { width: 20px; height: 16px; }
.t-bell { width: 17px; height: 20px; margin-left: 11px; margin-top: 2px; }
```
FILE: chart.js
```js
// Category axis of the area chart: [label, label length in px]
const categories = [
  ["North Indian", 66], ["North Indian, Chinese", 114], ["Chinese", 40], ["Fast Food", 50],
  ["North Indian, Mughlai", 115], ["Cafe", 22], ["North Indian, Mughlai, Chinese", 163], ["Bakery", 34],
  ["Bakery, Desserts", 84], ["Street Food", 60], ["Pizza, Fast Food", 82], ["Chinese, Fast Food", 97],
  ["Mithai, Street Food", 99], ["South Indian", 66], ["Bakery, Fast Food", 91], ["Mughlai", 42],
  ["Chinese, North Indian", 114], ["Ice Cream, Desserts", 102], ["Ice Cream", 51], ["North Indian, Fast Food", 123],
  ["Mithai", 32], ["North Indian, Chinese, Fast Fo...", 165], ["North Indian, Chinese, Mughlai", 163],
  ["Bakery, Desserts, Fast Food", 141], ["American, Fast Food, Salad, H...", 163],
  ["North Indian, Chinese, Contin...", 163], ["Mughlai, North Indian", 115], ["Fast Food, Burger", 91],
  ["Biryani", 34], ["Beverages", 53], ["Chinese, Thai", 68], ["Raw Meats, North Indian, Fast ...", 168],
  ["Pizza", 25], ["Finger Food", 62], ["Raw Meats, Fast Food", 113], ["Burger, Fast Food", 91],
  ["Italian", 31], ["Desserts", 43], ["Fast Food, North Indian", 123], ["Fast Food, Beverages", 110],
  ["Mexican", 43], ["Fast Food, Chinese", 97], ["South Indian, North Indian, Ch...", 168],
  ["North Indian, South Indian, Ch...", 168], ["Italian, Pizza, Fast Food", 120], ["South Indian, Chinese", 114],
  ["North Indian, Chinese, South I...", 166], ["North Indian, South Indian", 139], ["Indian Rupees(Rs.)", 96],
  ["American", 49], ["North Indian, Continental", 133], ["Japanese, Sushi", 81], ["Desserts, Ice Cream", 102],
  ["Burger, Desserts, Fast Food", 141], ["American, Fast Food", 106], ["North Indian, Street Food", 133],
  ["Cafe, Tea", 46], ["Italian, Pizza", 63], ["Thai", 21]
];

const group = document.getElementById("categories");
const step = (1435.5 - 268.5) / (categories.length - 1);
categories.forEach(([label, length], i) => {
  const text = document.createElementNS("http://www.w3.org/2000/svg", "text");
  const x = 272.5 + i * step;
  text.setAttribute("transform", `translate(${x.toFixed(1)} ${661.5 + length}) rotate(-90)`);
  text.setAttribute("textLength", length);
  text.textContent = label;
  group.appendChild(text);
});
```
